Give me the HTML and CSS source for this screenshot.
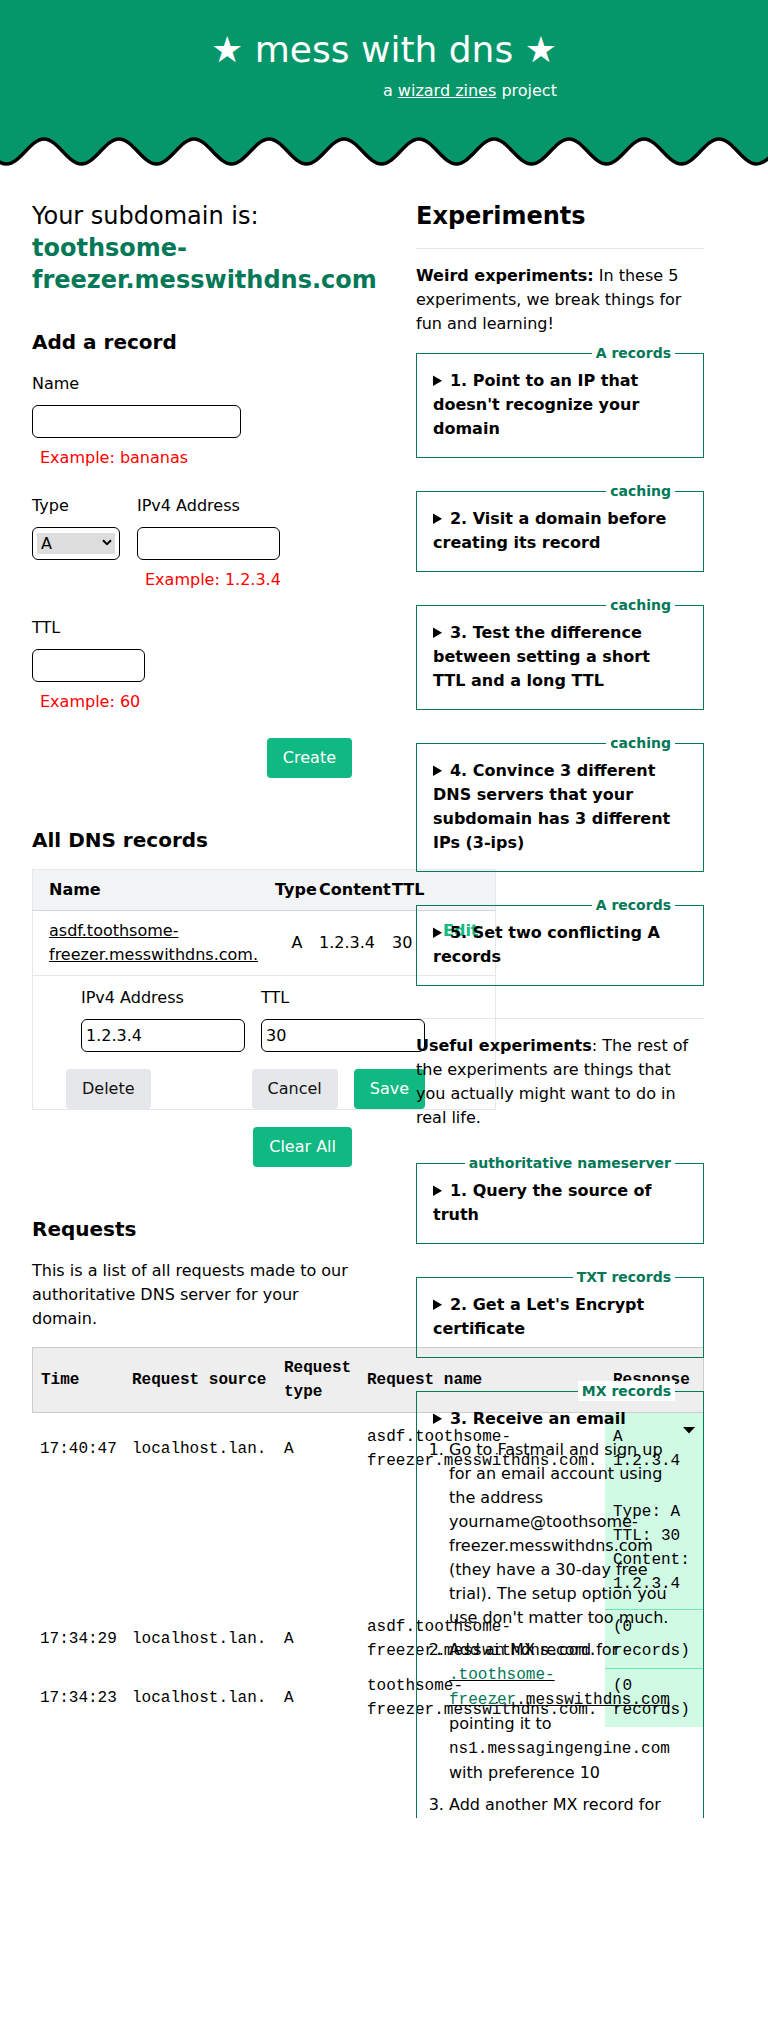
FILE: index.html
```html
<!DOCTYPE html>
<html lang="en">
<head>
<meta charset="utf-8">
<title>mess with dns</title>
<link rel="stylesheet" href="styles.css">
</head>
<body>
<header class="site-header">
  <div class="brand">
    <h1 class="brand-title">★ mess with dns ★</h1>
    <p class="brand-sub">a <a href="#">wizard zines</a> project</p>
  </div>
</header>
<svg class="wave" width="768" height="40" viewBox="0 0 768 40" aria-hidden="true">
  <path class="wave-fill" d="M-68.5,34 c13.66,0 23.84,-25 37.5,-25 c13.66,0 23.84,25 37.5,25 c13.66,0 23.84,-25 37.5,-25 c13.66,0 23.84,25 37.5,25 c13.66,0 23.84,-25 37.5,-25 c13.66,0 23.84,25 37.5,25 c13.66,0 23.84,-25 37.5,-25 c13.66,0 23.84,25 37.5,25 c13.66,0 23.84,-25 37.5,-25 c13.66,0 23.84,25 37.5,25 c13.66,0 23.84,-25 37.5,-25 c13.66,0 23.84,25 37.5,25 c13.66,0 23.84,-25 37.5,-25 c13.66,0 23.84,25 37.5,25 c13.66,0 23.84,-25 37.5,-25 c13.66,0 23.84,25 37.5,25 c13.66,0 23.84,-25 37.5,-25 c13.66,0 23.84,25 37.5,25 c13.66,0 23.84,-25 37.5,-25 c13.66,0 23.84,25 37.5,25 c13.66,0 23.84,-25 37.5,-25 c13.66,0 23.84,25 37.5,25 c13.66,0 23.84,-25 37.5,-25 c13.66,0 23.84,25 37.5,25 L831.5,0 L-68.5,0 Z"/>
  <path class="wave-line" d="M-68.5,34 c13.66,0 23.84,-25 37.5,-25 c13.66,0 23.84,25 37.5,25 c13.66,0 23.84,-25 37.5,-25 c13.66,0 23.84,25 37.5,25 c13.66,0 23.84,-25 37.5,-25 c13.66,0 23.84,25 37.5,25 c13.66,0 23.84,-25 37.5,-25 c13.66,0 23.84,25 37.5,25 c13.66,0 23.84,-25 37.5,-25 c13.66,0 23.84,25 37.5,25 c13.66,0 23.84,-25 37.5,-25 c13.66,0 23.84,25 37.5,25 c13.66,0 23.84,-25 37.5,-25 c13.66,0 23.84,25 37.5,25 c13.66,0 23.84,-25 37.5,-25 c13.66,0 23.84,25 37.5,25 c13.66,0 23.84,-25 37.5,-25 c13.66,0 23.84,25 37.5,25 c13.66,0 23.84,-25 37.5,-25 c13.66,0 23.84,25 37.5,25 c13.66,0 23.84,-25 37.5,-25 c13.66,0 23.84,25 37.5,25 c13.66,0 23.84,-25 37.5,-25 c13.66,0 23.84,25 37.5,25"/>
</svg>

<main class="layout">
  <section class="col-left">
    <h2 class="heading-xl subdomain-heading">Your subdomain is: <strong class="subdomain">toothsome-freezer.messwithdns.com</strong></h2>

    <h3 class="section-title add-title">Add a record</h3>
    <form class="record-form">
      <div class="field first-field">
        <label class="field-label" for="name">Name</label>
        <input id="name" class="text-input name-input" type="text">
        <div class="example">Example: bananas</div>
      </div>
      <div class="field-row">
        <div class="field type-field">
          <label class="field-label" for="type">Type</label>
          <div class="select-wrap">
            <select id="type" class="type-select"><option>A</option></select>
            <svg class="chevron" width="10" height="7" viewBox="0 0 10 7" aria-hidden="true"><path d="M1 1.2 L5 5.2 L9 1.2" fill="none" stroke="#000" stroke-width="2"/></svg>
          </div>
        </div>
        <div class="field">
          <label class="field-label" for="ip">IPv4 Address</label>
          <input id="ip" class="text-input ip-input" type="text">
          <div class="example">Example: 1.2.3.4</div>
        </div>
      </div>
      <div class="field block-gap">
        <label class="field-label" for="ttl">TTL</label>
        <input id="ttl" class="text-input ttl-input" type="text">
        <div class="example">Example: 60</div>
      </div>
      <div class="actions">
        <button type="button" class="btn btn-green">Create</button>
      </div>
    </form>

    <h3 class="section-title records-title">All DNS records</h3>
    <table class="dns-table">
      <colgroup>
        <col class="w-name"><col class="w-type"><col class="w-content"><col class="w-ttl"><col class="w-edit">
      </colgroup>
      <thead>
        <tr><th class="c-name">Name</th><th>Type</th><th>Content</th><th>TTL</th><th></th></tr>
      </thead>
      <tbody>
        <tr class="record-row">
          <td class="c-name"><a class="name-link" href="#">asdf.toothsome-freezer.messwithdns.com.</a></td>
          <td class="c-type">A</td>
          <td>1.2.3.4</td>
          <td>30</td>
          <td class="c-edit"><a class="edit-link" href="#">Edit</a></td>
        </tr>
        <tr class="edit-row">
          <td colspan="5">
            <div class="edit-fields">
              <div class="edit-field">
                <label class="field-label" for="edit-ip">IPv4 Address</label>
                <input id="edit-ip" class="text-input edit-input" type="text" value="1.2.3.4">
              </div>
              <div class="edit-field">
                <label class="field-label" for="edit-ttl">TTL</label>
                <input id="edit-ttl" class="text-input edit-input" type="text" value="30">
              </div>
            </div>
            <div class="edit-actions">
              <button type="button" class="btn btn-grey">Delete</button>
              <button type="button" class="btn btn-grey push">Cancel</button>
              <button type="button" class="btn btn-green">Save</button>
            </div>
          </td>
        </tr>
      </tbody>
    </table>
    <div class="clear-row">
      <button type="button" class="btn btn-green">Clear All</button>
    </div>

    <h3 class="section-title requests-title">Requests</h3>
    <p class="requests-intro">This is a list of all requests made to our authoritative DNS server for your domain.</p>
    <table class="req-table">
      <colgroup>
        <col class="w-time"><col class="w-source"><col class="w-rtype"><col class="w-rname"><col class="w-resp">
      </colgroup>
      <thead>
        <tr><th>Time</th><th>Request source</th><th>Request type</th><th>Request name</th><th>Response</th></tr>
      </thead>
      <tbody>
        <tr class="first-row">
          <td>17:40:47</td>
          <td>localhost.lan.</td>
          <td>A</td>
          <td class="c-rname">asdf.toothsome-freezer.messwithdns.com.</td>
          <td class="resp">
            <div class="resp-box">
              <div class="resp-summary">A 1.2.3.4</div>
              <svg class="resp-caret" width="12" height="7" viewBox="0 0 12 7" aria-hidden="true"><path d="M0 0 H12 L6 6.5 Z" fill="#000"/></svg>
              <div class="resp-detail">Type: A<br>TTL: 30<br>Content: 1.2.3.4</div>
            </div>
          </td>
        </tr>
        <tr>
          <td>17:34:29</td>
          <td>localhost.lan.</td>
          <td>A</td>
          <td class="c-rname">asdf.toothsome-freezer.messwithdns.com.</td>
          <td class="resp">(0 records)</td>
        </tr>
        <tr>
          <td>17:34:23</td>
          <td>localhost.lan.</td>
          <td>A</td>
          <td class="c-rname">toothsome-freezer.messwithdns.com.</td>
          <td class="resp">(0 records)</td>
        </tr>
      </tbody>
    </table>
  </section>

  <aside class="col-right">
    <h2 class="heading-xl exp-title">Experiments</h2>
    <hr class="divider">
    <p class="exp-intro"><strong>Weird experiments:</strong> In these 5 experiments, we break things for fun and learning!</p>

    <fieldset class="exp">
      <legend>A records</legend>
      <details><summary>1. Point to an IP that doesn't recognize your domain</summary><p>Create an A record pointing to an IP address.</p></details>
    </fieldset>
    <fieldset class="exp">
      <legend>caching</legend>
      <details><summary>2. Visit a domain before creating its record</summary><p>Look up a name, then create it.</p></details>
    </fieldset>
    <fieldset class="exp">
      <legend>caching</legend>
      <details><summary>3. Test the difference between setting a short TTL and a long TTL</summary><p>Change a record and watch the TTL.</p></details>
    </fieldset>
    <fieldset class="exp">
      <legend>caching</legend>
      <details><summary>4. Convince 3 different DNS servers that your subdomain has 3 different IPs (3-ips)</summary><p>Change the record between lookups.</p></details>
    </fieldset>
    <fieldset class="exp">
      <legend>A records</legend>
      <details><summary>5. Set two conflicting A records</summary><p>Create two A records for one name.</p></details>
    </fieldset>

    <hr class="divider divider-2">
    <p class="useful-intro"><strong>Useful experiments</strong>: The rest of the experiments are things that you actually might want to do in real life.</p>

    <fieldset class="exp">
      <legend>authoritative nameserver</legend>
      <details><summary>1. Query the source of truth</summary><p>Ask the authoritative nameserver directly.</p></details>
    </fieldset>
    <fieldset class="exp">
      <legend>TXT records</legend>
      <details><summary>2. Get a Let's Encrypt certificate</summary><p>Use a DNS challenge.</p></details>
    </fieldset>
    <fieldset class="exp">
      <legend>MX records</legend>
      <details open>
        <summary class="open-summary">3. Receive an email</summary>
        <ol class="steps">
          <li>Go to Fastmail and sign up for an email account using the address yourname@toothsome-freezer.messwithdns.com (they have a 30-day free trial). The setup option you use don't matter too much.</li>
          <li>Add an MX record for <a class="mx-link" href="#"><code><span class="mx-green">.toothsome-freezer</span>.messwithdns.com</code></a> pointing it to <code>ns1.messagingengine.com</code> with preference 10</li>
          <li>Add another MX record for <code>toothsome-freezer.messwithdns.com</code> pointing it to <code>ns2.messagingengine.com</code> with preference 20</li>
        </ol>
      </details>
    </fieldset>
  </aside>
</main>
</body>
</html>
```

FILE: styles.css
```css
* {
  box-sizing: border-box;
}

html,
body {
  margin: 0;
  padding: 0;
  background: #fff;
}

body {
  width: 768px;
  font-family: "DejaVu Sans", "Noto Sans", sans-serif;
  font-size: 16px;
  line-height: 24px;
  color: #000;
}

h1,
h2,
h3,
p {
  margin: 0;
}

/* ---------- header ---------- */
.site-header {
  height: 130px;
  padding-top: 30px;
  background: #059669;
  color: #fff;
  text-align: center;
}

.brand {
  display: inline-block;
  text-align: right;
}

.brand-title {
  font-size: 36px;
  line-height: 40px;
  font-weight: normal;
}

.brand-sub {
  margin-top: 9px;
}

.brand-sub a {
  color: #fff;
  text-decoration: underline;
}

.wave {
  display: block;
}

.wave-fill {
  fill: #059669;
}

.wave-line {
  fill: none;
  stroke: #000;
  stroke-width: 3.5;
}

/* ---------- layout ---------- */
.layout {
  display: grid;
  grid-template-columns: 320px 288px;
  column-gap: 64px;
  align-items: start;
  padding: 30px 32px 0;
}

.col-left {
  min-width: 0;
}

.heading-xl {
  font-size: 24px;
  line-height: 32px;
}

.subdomain-heading {
  font-weight: normal;
}

.subdomain {
  color: #047857;
  font-weight: bold;
}

.section-title {
  font-size: 20px;
  line-height: 28px;
  font-weight: bold;
}

.add-title {
  margin-top: 32px;
}

/* ---------- form ---------- */
.field {
  display: flex;
  flex-direction: column;
  align-items: flex-start;
}

.first-field {
  margin-top: 16px;
}

.block-gap {
  margin-top: 24px;
}

.field-label {
  display: block;
}

.text-input {
  display: block;
  height: 33px;
  margin: 9px 0 0;
  padding: 0 4px;
  border: 1px solid #000;
  border-radius: 6px;
  background: #fff;
  font: inherit;
  color: #000;
}

.name-input {
  width: 209px;
}

.ip-input {
  width: 143px;
}

.ttl-input {
  width: 113px;
}

.example {
  margin-top: 8px;
  padding-left: 8px;
  color: #ff0000;
}

.field-row {
  display: flex;
  align-items: flex-start;
  gap: 17px;
  margin-top: 24px;
}

.type-field {
  width: 88px;
}

.select-wrap {
  position: relative;
  width: 88px;
  height: 33px;
  margin-top: 9px;
  padding: 5px 4px;
  border: 1px solid #000;
  border-radius: 6px;
}

.type-select {
  -webkit-appearance: none;
  appearance: none;
  display: block;
  width: 78px;
  height: 21px;
  margin: 0;
  padding: 0 0 0 4px;
  border: 0;
  border-radius: 0;
  background: #dddddd;
  color: #000;
  font: inherit;
  line-height: 21px;
}

.chevron {
  position: absolute;
  left: 69px;
  top: 11px;
  pointer-events: none;
}

.actions {
  display: flex;
  justify-content: flex-end;
  margin-top: 24px;
}

.btn {
  padding: 8px 16px;
  border: 0;
  border-radius: 4px;
  font: inherit;
  line-height: 24px;
  cursor: pointer;
}

.btn-green {
  background: #10b981;
  color: #fff;
}

.btn-grey {
  background: #e5e7eb;
  color: #111;
}

/* ---------- DNS records table ---------- */
.records-title {
  margin-top: 48px;
}

.dns-table {
  width: 464px;
  margin-top: 15px;
  table-layout: fixed;
  border-collapse: separate;
  border-spacing: 0;
  border: 1px solid #e5e7eb;
}

.w-name { width: 242px; }
.w-type { width: 44px; }
.w-content { width: 73px; }
.w-ttl { width: 51px; }
.w-edit { width: 52px; }

.dns-table th {
  padding: 8px 0;
  background: #f3f4f6;
  border-bottom: 1px solid #d1d5db;
  text-align: left;
  font-weight: bold;
  white-space: nowrap;
}

.dns-table td {
  padding: 8px 0;
  border-bottom: 1px solid #e5e7eb;
  vertical-align: middle;
}

.dns-table .c-name {
  padding-left: 16px;
}

.dns-table .c-type {
  text-align: center;
}

.dns-table .c-edit {
  vertical-align: top;
}

.name-link {
  color: #000;
  text-decoration: underline;
}

.edit-link {
  color: #10b981;
  font-weight: bold;
  text-decoration: none;
}

.dns-table .edit-row td {
  padding: 10px 0 0;
  border-bottom: 0;
}

.edit-fields {
  display: flex;
  gap: 16px;
  padding-left: 48px;
}

.edit-field {
  width: 164px;
}

.edit-input {
  width: 164px;
}

.edit-actions {
  display: flex;
  gap: 16px;
  width: 392px;
  margin-top: 17px;
  padding-left: 33px;
}

.edit-actions .push {
  margin-left: auto;
}

.clear-row {
  display: flex;
  justify-content: flex-end;
  margin-top: 17px;
}

/* ---------- requests ---------- */
.requests-title {
  margin-top: 48px;
}

.requests-intro {
  margin-top: 16px;
}

.req-table {
  width: 672px;
  margin-top: 16px;
  table-layout: fixed;
  border-collapse: separate;
  border-spacing: 0;
  font-family: "Liberation Mono", "DejaVu Sans Mono", monospace;
  font-size: 16px;
}

.w-time { width: 92px; }
.w-source { width: 152px; }
.w-rtype { width: 83px; }
.w-rname { width: 246px; }
.w-resp { width: 99px; }

.req-table th {
  padding: 8px;
  background: #eeeeee;
  border-top: 1px solid #cccccc;
  border-bottom: 1px solid #cccccc;
  text-align: left;
  font-weight: bold;
  vertical-align: middle;
}

.req-table th:first-child {
  border-left: 1px solid #cccccc;
}

.req-table th:last-child {
  border-right: 1px solid #cccccc;
}

.req-table td {
  padding: 5px 8px;
  vertical-align: middle;
}

.req-table .first-row td {
  vertical-align: top;
  padding-top: 24px;
}

.req-table .first-row td.c-rname {
  padding-top: 12px;
}

.req-table td.resp {
  background: #d1fae5;
}

.req-table tr + tr td.resp {
  border-top: 1px solid #6ee7b7;
}

.req-table .first-row td.resp {
  padding: 12px 8px 13px;
}

.resp-box {
  position: relative;
}

.resp-caret {
  position: absolute;
  right: 1px;
  top: 2px;
}

.resp-detail {
  margin-top: 27px;
}

/* ---------- experiments ---------- */
.col-right {
  position: relative;
  min-width: 0;
  max-height: 1618px;
  overflow: hidden;
}

.exp-title {
  font-weight: bold;
}

.divider {
  height: 0;
  margin: 16px 0 0;
  border: 0;
  border-top: 1px solid #e5e7eb;
}

.divider-2 {
  margin-top: 32px;
}

.exp-intro {
  margin: 15px 0 7px;
}

.useful-intro {
  margin: 15px 0 23px;
}

.exp {
  min-width: 0;
  margin: 0 0 23px;
  padding: 6px 16px 16px;
  border: 1px solid #047857;
}

.exp legend {
  margin-left: auto;
  margin-right: 12px;
  padding: 0 4px;
  background: #fff;
  color: #047857;
  font-size: 14px;
  line-height: 20px;
  font-weight: bold;
}

.exp summary {
  font-weight: bold;
  cursor: pointer;
}

.exp .open-summary {
  list-style-type: disclosure-closed;
}

.steps {
  margin: 7px 0 0;
  padding-left: 16px;
}

.steps li + li {
  margin-top: 8px;
}

.steps code {
  font-family: "Liberation Mono", "DejaVu Sans Mono", monospace;
  font-size: 16px;
}

.mx-link {
  color: #000;
  text-decoration: underline;
}

.mx-green {
  color: #047857;
}
```
